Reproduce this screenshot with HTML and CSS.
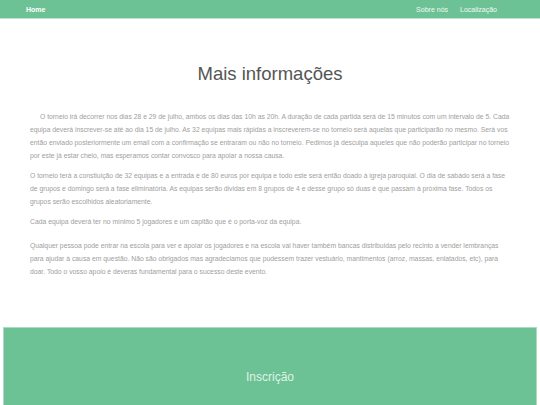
FILE: index.html
```html
<!DOCTYPE html>
<html lang="pt">
<head>
<meta charset="utf-8">
<title>Mais informações</title>
<link rel="stylesheet" href="styles.css">
</head>
<body>
<nav class="navbar">
  <a class="nav-home" href="#">Home</a>
  <div class="nav-right">
    <a class="nav-link" href="#">Sobre nós</a>
    <a class="nav-link" href="#">Localização</a>
  </div>
</nav>
<main class="content">
  <h1 class="title">Mais informações</h1>
  <p class="text indent">O torneio irá decorrer nos dias 28 e 29 de julho, ambos os dias das 10h as 20h. A duração de cada partida será de 15 minutos com um intervalo de 5. Cada equipa deverá inscrever-se até ao dia 15 de julho. As 32 equipas mais rápidas a inscreverem-se no torneio será aquelas que participarão no mesmo. Será vos então enviado posteriormente um email com a confirmação se entraram ou não no torneio. Pedimos já desculpa aqueles que não poderão participar no torneio por este já estar cheio, mas esperamos contar convosco para apoiar a nossa causa.</p>
  <p class="text">O torneio terá a constiuição de 32 equipas e a entrada é de 80 euros por equipa e todo este será então doado à igreja paroquial. O dia de sabádo será a fase de grupos e domingo será a fase eliminatória. As equipas serão dividas em 8 grupos de 4 e desse grupo só duas é que passam à próxima fase. Todos os grupos serão escolhidos aleatoriamente.</p>
  <p class="text text-gap">Cada equipa deverá ter no mínimo 5 jogadores e um capitão que é o porta-voz da equipa.</p>
  <p class="text">Qualquer pessoa pode entrar na escola para ver e apoiar os jogadores e na escola vai haver também bancas distribuidas pelo recinto a vender lembranças para ajudar à causa em questão. Não são obrigados mas agradeciamos que pudessem trazer vestuário, mantimentos (arroz, massas, enlatados, etc), para doar. Todo o vosso apoio é deveras fundamental para o sucesso deste evento.</p>
</main>
<section class="signup">
  <h2 class="signup-title">Inscrição</h2>
</section>
</body>
</html>
```
FILE: styles.css
```css
html, body {
  margin: 0;
  padding: 0;
  background: #ffffff;
  font-family: "Liberation Sans", Arial, sans-serif;
}
.navbar {
  display: flex;
  align-items: center;
  justify-content: space-between;
  height: 18px;
  background: #6cc294;
  border-bottom: 1px solid #bfe5d0;
  padding: 0 43px 0 26px;
}
.nav-home {
  color: #ffffff;
  font-weight: bold;
  font-size: 7px;
  text-decoration: none;
}
.nav-right {
  display: flex;
  gap: 12px;
}
.nav-link {
  color: #f0faf4;
  font-size: 7px;
  text-decoration: none;
}
.content {
  padding: 43px 30px 42px 30px;
}
.title {
  margin: 0 0 24px 0;
  text-align: center;
  font-weight: normal;
  font-size: 18.5px;
  line-height: 24px;
  color: #555555;
}
.text {
  margin: 0 0 7px 0;
  font-size: 6.8px;
  line-height: 13px;
  color: #a0a0a0;
}
.text-gap {
  margin-bottom: 11px;
}
.indent {
  text-indent: 10px;
}
.signup {
  margin: 0 3px;
  height: 78px;
  background: #6cc294;
  border: 1px solid #a9dcc0;
  border-bottom: none;
  display: flex;
  justify-content: center;
}
.signup-title {
  margin: 41px 0 0 0;
  font-weight: normal;
  font-size: 12px;
  line-height: 16px;
  color: #dff3e7;
}
```
